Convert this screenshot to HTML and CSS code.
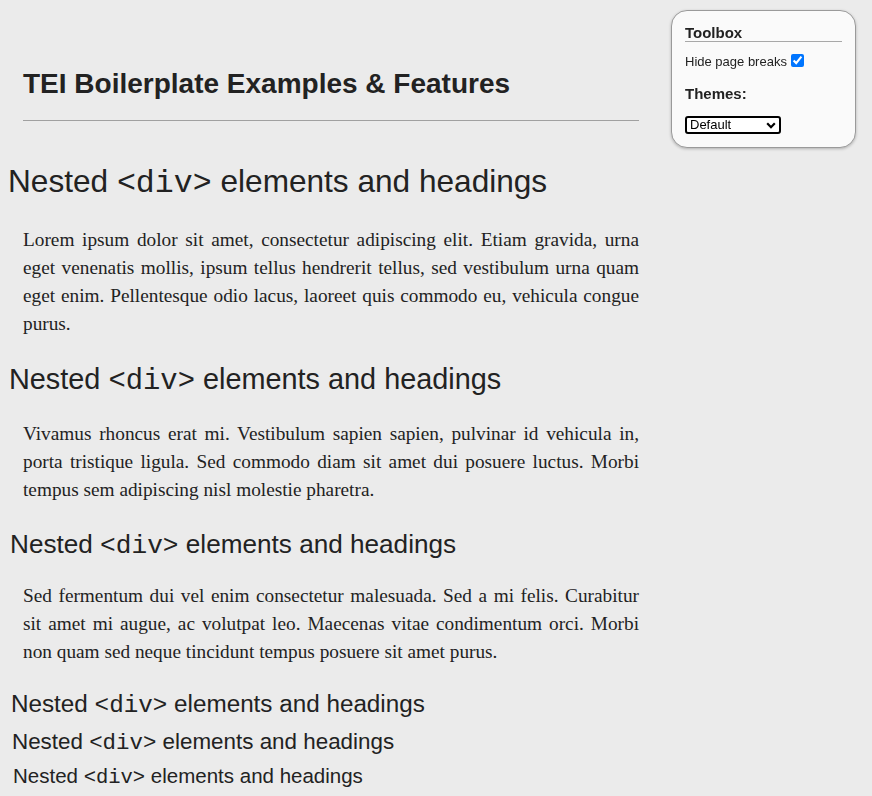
FILE: index.html
```html
<!DOCTYPE html>
<html lang="en">
<head>
<meta charset="utf-8">
<title>TEI Boilerplate Examples &amp; Features</title>
<link rel="stylesheet" href="styles.css">
</head>
<body>
<div class="page">
  <header class="title-block">
    <h1 class="title">TEI Boilerplate Examples &amp; Features</h1>
    <hr class="rule">
  </header>
  <div class="section">
    <h2 class="head lv1">Nested <code>&lt;div&gt;</code> elements and headings</h2>
    <p class="para p1">Lorem ipsum dolor sit amet, consectetur adipiscing elit. Etiam gravida, urna eget venenatis mollis, ipsum tellus hendrerit tellus, sed vestibulum urna quam eget enim. Pellentesque odio lacus, laoreet quis commodo eu, vehicula congue purus.</p>
    <div class="section">
      <h3 class="head lv2">Nested <code>&lt;div&gt;</code> elements and headings</h3>
      <p class="para p2">Vivamus rhoncus erat mi. Vestibulum sapien sapien, pulvinar id vehicula in, porta tristique ligula. Sed commodo diam sit amet dui posuere luctus. Morbi tempus sem adipiscing nisl molestie pharetra.</p>
      <div class="section">
        <h4 class="head lv3">Nested <code>&lt;div&gt;</code> elements and headings</h4>
        <p class="para p3">Sed fermentum dui vel enim consectetur malesuada. Sed a mi felis. Curabitur sit amet mi augue, ac volutpat leo. Maecenas vitae condimentum orci. Morbi non quam sed neque tincidunt tempus posuere sit amet purus.</p>
        <div class="section">
          <h5 class="head lv4">Nested <code>&lt;div&gt;</code> elements and headings</h5>
          <div class="section">
            <h6 class="head lv5">Nested <code>&lt;div&gt;</code> elements and headings</h6>
            <div class="section">
              <div class="head lv6">Nested <code>&lt;div&gt;</code> elements and headings</div>
            </div>
          </div>
        </div>
      </div>
    </div>
  </div>
</div>

<aside class="toolbox">
  <h3 class="toolbox-title">Toolbox</h3>
  <label class="toolbox-row">Hide page breaks <input type="checkbox" class="check" checked></label>
  <h3 class="toolbox-sub">Themes:</h3>
  <span class="select-wrap">
    <select class="select">
      <option>Default</option>
      <option>Sleepy</option>
      <option>Terminal</option>
    </select>
    <svg class="chev" width="10" height="7" viewBox="0 0 10 7" aria-hidden="true"><path d="M1.2 1.3 L5 5.2 L8.8 1.3" fill="none" stroke="#000" stroke-width="2.2"/></svg>
  </span>
</aside>
</body>
</html>
```

FILE: styles.css
```css
html {
  background: #ebebeb;
}
body {
  margin: 8px;
  background: #ebebeb;
  color: #222;
  font-family: "Liberation Serif", serif;
}
.page {
  width: 631px;
}
.title-block {
  padding: 60px 0 0 15px;
}
.title {
  margin: 0;
  font-family: "Liberation Sans", Arial, sans-serif;
  font-weight: bold;
  font-size: 28px;
  line-height: 32px;
  color: #222;
}
.rule {
  margin: 20px 0 0;
  border: 0;
  border-top: 1px solid #a0a0a0;
  height: 0;
}
.head {
  font-family: "Liberation Sans", Arial, sans-serif;
  font-weight: normal;
  color: #222;
  line-height: 1.15;
}
.head code {
  font-family: "Liberation Mono", monospace;
  font-size: 1em;
  line-height: 0;
}
.lv1 { font-size: 31.6px;  margin: 42.2px 0 0 0; }
.lv2 { font-size: 28.85px; margin: 25.2px 0 0 1px; }
.lv3 { font-size: 26.15px; margin: 24.7px 0 0 2px; }
.lv4 { font-size: 24.25px; margin: 23.75px 0 0 3px; }
.lv5 { font-size: 22.4px;  margin: 10.9px 0 0 4px; }
.lv6 { font-size: 20.5px;  margin: 9.4px 0 0 5px; }
.para {
  margin: 0 0 0 15px;
  font-size: 19.3px;
  line-height: 28px;
  text-align: justify;
  color: #222;
}
.p1 { margin-top: 26px; }
.p2 { margin-top: 24.6px; }
.p3 { margin-top: 22.9px; }

.toolbox {
  position: fixed;
  top: 10px;
  right: 16px;
  width: 157px;
  padding: 0 13px 13px;
  background: #fafafa;
  border: 1px solid #9a9a9a;
  border-radius: 16px;
  box-shadow: 0 1px 3px rgba(0, 0, 0, 0.25);
  font-family: "Liberation Sans", Arial, sans-serif;
  color: #222;
}
.toolbox-title {
  margin: 13.3px 0 0;
  font-size: 15px;
  line-height: 17px;
  font-weight: bold;
  border-bottom: 1px solid #a8a8a8;
}
.toolbox-row {
  display: flex;
  align-items: center;
  margin-top: 11.3px;
  font-size: 13px;
  line-height: 15px;
}
.check {
  margin: 0 0 2px 4px;
  width: 13px;
  height: 13px;
}
.toolbox-sub {
  margin: 16px 0 0;
  font-size: 15px;
  line-height: 17px;
  font-weight: bold;
}
.select-wrap {
  position: relative;
  display: block;
  width: 96px;
  margin-top: 14.4px;
}
.select {
  display: block;
  appearance: none;
  -webkit-appearance: none;
  width: 96px;
  height: 18px;
  margin: 0;
  padding: 0 0 0 3px;
  border: 2px solid #000;
  border-radius: 3px;
  background: #fff;
  color: #000;
  font-family: "Liberation Sans", Arial, sans-serif;
  font-size: 13px;
  line-height: 14px;
}
.chev {
  position: absolute;
  top: 6px;
  right: 5px;
  pointer-events: none;
}
```
